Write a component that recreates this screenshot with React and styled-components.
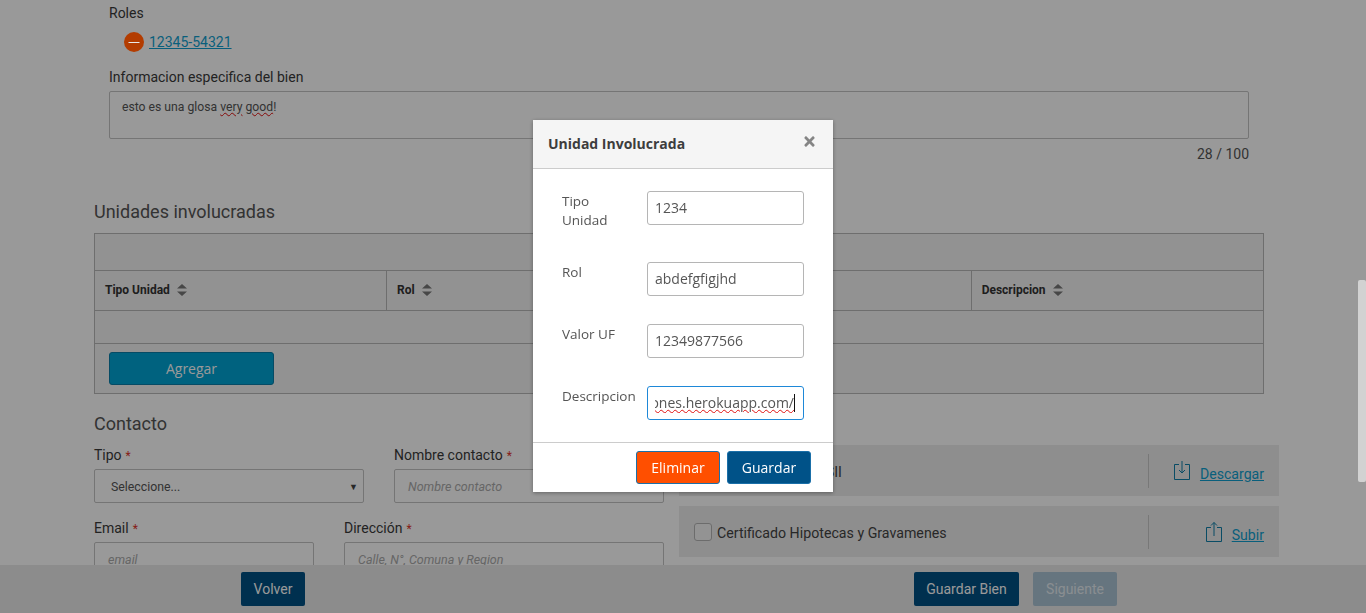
import React from "react";
import { FaTimes } from "react-icons/fa";
import styled, { createGlobalStyle } from "styled-components";

const GlobalStyle = createGlobalStyle`
  html, body {
    margin: 0;
    height: 100%;
    overflow: hidden;
    background: #ffffff;
  }
  * {
    box-sizing: border-box;
  }
  body {
    font-family: Roboto, "Liberation Sans", sans-serif;
    font-size: 14px;
    color: #333333;
  }
`;

const Page = styled.div`
  height: 613px;
  overflow: hidden;
  padding: 3px 0 0 94px;
`;

const Indented = styled.div`
  width: 1155px;
  padding-left: 15px;
`;

const Label = styled.div`
  font-size: 14px;
  line-height: 20px;
  color: #3a3a3a;
  margin-top: ${(p) => p.$top || 0}px;
`;

const Required = styled.span`
  color: #e0352b;
  margin-left: 4px;
  font-size: 12px;
  line-height: 1;
`;

const RoleRow = styled.div`
  display: flex;
  align-items: center;
  gap: 5px;
  height: 20px;
  margin-top: 9px;
  padding-left: 15px;
`;

// the reference keeps this badge brighter than the dimmed page behind the modal
const RoleBadge = styled.svg`
  position: relative;
  z-index: 1;
  flex: none;
`;

const Link = styled.a`
  color: #0f9fcf;
  font-size: 14px;
  text-decoration: underline;
`;

const TextBox = styled.div`
  height: 48px;
  margin-top: 4px;
  padding: 6px 12px;
  border: 1px solid #c4c4c4;
  border-radius: 2px;
  font-size: 12.2px;
  line-height: 18px;
  color: #555555;
`;

const Misspelled = styled.span`
  text-decoration: underline wavy #e01010 1px;
`;

const Counter = styled.div`
  margin-top: 5px;
  text-align: right;
  line-height: 20px;
  color: #555555;
`;

const SectionTitle = styled.h2`
  margin: ${(p) => p.$top}px 0 0;
  font-size: 18px;
  font-weight: 400;
  line-height: 24px;
  color: #555555;
`;

const Table = styled.div`
  width: 1170px;
  height: 161px;
  margin-top: 9px;
  border: 1px solid #b8b8b8;
  background: #f3f3f3;
  display: grid;
  grid-template-rows: 37px 40px 33px 1fr;
`;

const TableRow = styled.div`
  border-bottom: 1px solid #b8b8b8;
  &:last-child {
    border-bottom: 0;
    padding: 8px 14px;
  }
`;

const HeadRow = styled(TableRow)`
  display: grid;
  grid-template-columns: 291px repeat(3, 1fr);
`;

const HeadCell = styled.div`
  display: flex;
  align-items: center;
  gap: 7px;
  padding: 0 0 2px 10px;
  font-size: 12px;
  font-weight: 700;
  color: #333333;
  border-left: 1px solid #b8b8b8;
  &:first-child {
    border-left: 0;
  }
  svg {
    fill: #777777;
  }
`;

const AddButton = styled.button`
  width: 165px;
  height: 33px;
  border: 1px solid #0a7ea8;
  border-radius: 3px;
  background: #00a3d4;
  color: #ffffff;
  font-family: "Open Sans", sans-serif;
  font-size: 14px;
`;

const Columns = styled.div`
  display: flex;
  gap: 15px;
  margin-top: 9px;
`;

const ContactColumn = styled.div`
  width: 570px;
`;

const FormRow = styled.div`
  display: flex;
  gap: 30px;
  margin-bottom: 15px;
`;

const FormField = styled.div`
  width: ${(p) => p.$width}px;
`;

const Control = styled.div`
  height: 34px;
  margin-top: 4px;
  padding: 0 13px;
  display: flex;
  align-items: center;
  justify-content: space-between;
  border: 1px solid #c4c4c4;
  border-radius: 2px;
  background: #ffffff;
  font-size: 12.5px;
  color: #555555;
`;

const SelectBox = styled(Control)`
  padding: 2px 5px 0 16px;
  font-size: 12.3px;
  span:last-child {
    font-size: 9px;
    color: #444444;
  }
`;

const Placeholder = styled(Control)`
  font-style: italic;
  color: #aaaaaa;
`;

const DocumentColumn = styled.div`
  width: 600px;
  display: flex;
  flex-direction: column;
  gap: 10px;
`;

const DocumentRow = styled.div`
  height: 51px;
  padding: 0 15px;
  display: flex;
  align-items: center;
  background: #ededed;
`;

const CheckBox = styled.span`
  width: 18px;
  height: 18px;
  border: 1px solid #b5b5b5;
  border-radius: 3px;
  background: #f5f5f5;
`;

const DocumentName = styled.span`
  flex: 1;
  margin-left: 5px;
  padding-top: 2px;
  font-size: 14.2px;
  color: #444444;
`;

const DocumentAction = styled.div`
  width: 116px;
  height: 34px;
  display: flex;
  align-items: center;
  justify-content: flex-end;
  gap: 10px;
  border-left: 1px solid #c8c8c8;
  svg {
    stroke: #0f7fa8;
    fill: none;
    flex: none;
  }
  a {
    margin-top: 7px;
    font-size: 14.1px;
  }
`;

const Footer = styled.div`
  position: fixed;
  left: 0;
  right: 0;
  bottom: 0;
  height: 48px;
  padding-top: 7px;
  display: flex;
  background: #eaeaea;
`;

const FooterButton = styled.button`
  height: 34px;
  width: ${(p) => p.$width}px;
  margin-left: ${(p) => p.$left}px;
  border: 0;
  border-radius: 2px;
  background: ${(p) => (p.$disabled ? "#aac3d4" : "#005084")};
  color: ${(p) => (p.$disabled ? "#e6edf2" : "#ffffff")};
  font-family: Roboto, sans-serif;
  font-size: 14px;
`;

const Backdrop = styled.div`
  position: fixed;
  inset: 0;
  background: rgba(0, 0, 0, 0.4);
`;

const ScrollThumb = styled.div`
  position: fixed;
  top: 280px;
  right: 0;
  width: 8px;
  height: 202px;
  border-radius: 2px;
  background: #d2d2d2;
`;

const Modal = styled.div`
  position: fixed;
  z-index: 2;
  top: 120px;
  left: 533px;
  width: 300px;
  height: 372px;
  background: #ffffff;
  box-shadow: 0 1px 4px rgba(0, 0, 0, 0.35);
  font-family: "Open Sans", sans-serif;
`;

const ModalHeader = styled.div`
  height: 49px;
  padding: 0 16px 0 15px;
  display: flex;
  align-items: center;
  justify-content: space-between;
  background: #f5f5f5;
  border-bottom: 1px solid #cccccc;
  svg {
    margin-top: -5px;
    color: #858585;
    font-size: 15px;
  }
`;

const ModalTitle = styled.div`
  margin-top: -2px;
  font-size: 14px;
  font-weight: 700;
  color: #3d3d3d;
`;

const ModalBody = styled.div`
  height: 274px;
  padding: 22px 29px 0;
  display: flex;
  flex-direction: column;
  gap: 28px;
  border-bottom: 1px solid #cccccc;
`;

const ModalRow = styled.div`
  display: grid;
  grid-template-columns: 85px 157px;
  align-items: start;
`;

const ModalLabel = styled.label`
  padding: 1px 0 4px;
  font-size: 13.5px;
  line-height: 19px;
  color: #555555;
`;

const ModalInput = styled.input`
  width: 157px;
  height: 34px;
  padding: 0 7px 2px;
  border: 1px solid #b5b5b5;
  border-radius: 3px;
  font-family: "Open Sans", sans-serif;
  font-size: 14px;
  color: #555555;
  outline: none;
`;

const FocusedInput = styled.div`
  width: 157px;
  height: 34px;
  padding: 0 8px 0 7px;
  display: flex;
  align-items: center;
  border: 1px solid #1e88d8;
  border-radius: 3px;
  font-size: 14px;
  color: #555555;
`;

const ClippedText = styled.div`
  flex: 1;
  display: flex;
  justify-content: flex-end;
  overflow: hidden;
  white-space: nowrap;
  line-height: 20px;
`;

const Caret = styled.span`
  flex: none;
  width: 1px;
  height: 18px;
  background: #111111;
`;

const ModalFooter = styled.div`
  padding: 8px 22px 0 0;
  display: flex;
  justify-content: flex-end;
  gap: 7px;
`;

const ModalButton = styled.button`
  width: 84px;
  height: 33px;
  border: 1px solid #1a6fa8;
  border-radius: 3px;
  background: ${(p) => (p.$danger ? "#ff4f00" : "#005288")};
  color: #ffffff;
  font-family: "Open Sans", sans-serif;
  font-size: 14px;
  font-weight: 500;
`;

const MinusIcon = () => (
  <RoleBadge width="20" height="20" viewBox="0 0 20 20">
    <circle cx="10" cy="10" r="10" fill="#b33c00" />
    <rect x="4.5" y="10" width="11" height="1" fill="#e8e8e8" />
  </RoleBadge>
);

const SortIcon = () => (
  <svg width="10" height="12" viewBox="0 0 10 12">
    <path d="M5 0L10 4.5H0ZM0 7.5H10L5 12Z" />
  </svg>
);

const DownloadIcon = () => (
  <svg width="16" height="19" viewBox="0 0 16 19">
    <path d="M5 3.5H.5V18.5H15.5V3.5H11M8 0V12M5 9L8 12L11 9" />
  </svg>
);

const UploadIcon = () => (
  <svg width="16" height="20" viewBox="0 0 16 20">
    <path d="M5 5.5H.5V19.5H15.5V5.5H11M8 14V.5M5 3.5L8 .5L11 3.5" />
  </svg>
);

const columns = ["Tipo Unidad", "Rol", "Valor UF", "Descripcion"];

const App = () => {
  return (
    <>
      <GlobalStyle />
      <Page>
        <Indented>
          <Label>Roles</Label>
          <RoleRow>
            <MinusIcon />
            <Link>12345-54321</Link>
          </RoleRow>
          <Label $top={15}>Informacion especifica del bien</Label>
          <TextBox>
            esto es una glosa <Misspelled>very</Misspelled>{" "}
            <Misspelled>good</Misspelled>!
          </TextBox>
          <Counter>28 / 100</Counter>
        </Indented>

        <SectionTitle $top={36}>Unidades involucradas</SectionTitle>
        <Table>
          <TableRow />
          <HeadRow>
            {columns.map((name) => (
              <HeadCell key={name}>
                {name} <SortIcon />
              </HeadCell>
            ))}
          </HeadRow>
          <TableRow />
          <TableRow>
            <AddButton>Agregar</AddButton>
          </TableRow>
        </Table>

        <SectionTitle $top={18}>Contacto</SectionTitle>
        <Columns>
          <ContactColumn>
            <FormRow>
              <FormField $width={270}>
                <Label>
                  Tipo<Required>*</Required>
                </Label>
                <SelectBox>
                  <span>Seleccione...</span>
                  <span>▼</span>
                </SelectBox>
              </FormField>
              <FormField $width={270}>
                <Label>
                  Nombre contacto<Required>*</Required>
                </Label>
                <Placeholder>Nombre contacto</Placeholder>
              </FormField>
            </FormRow>
            <FormRow>
              <FormField $width={220}>
                <Label>
                  Email<Required>*</Required>
                </Label>
                <Placeholder>email</Placeholder>
              </FormField>
              <FormField $width={320}>
                <Label>
                  Dirección<Required>*</Required>
                </Label>
                <Placeholder>Calle, N°, Comuna y Region</Placeholder>
              </FormField>
            </FormRow>
          </ContactColumn>
          <DocumentColumn>
            <DocumentRow>
              <CheckBox />
              <DocumentName>Certificado Pago SII</DocumentName>
              <DocumentAction>
                <DownloadIcon />
                <Link>Descargar</Link>
              </DocumentAction>
            </DocumentRow>
            <DocumentRow>
              <CheckBox />
              <DocumentName>Certificado Hipotecas y Gravamenes</DocumentName>
              <DocumentAction>
                <UploadIcon />
                <Link>Subir</Link>
              </DocumentAction>
            </DocumentRow>
          </DocumentColumn>
        </Columns>
      </Page>

      <Footer>
        <FooterButton $width={64} $left={241}>
          Volver
        </FooterButton>
        <FooterButton $width={105} $left={609}>
          Guardar Bien
        </FooterButton>
        <FooterButton $width={84} $left={14} $disabled>
          Siguiente
        </FooterButton>
      </Footer>

      <Backdrop />
      <ScrollThumb />

      <Modal>
        <ModalHeader>
          <ModalTitle>Unidad Involucrada</ModalTitle>
          <FaTimes />
        </ModalHeader>
        <ModalBody>
          <ModalRow>
            <ModalLabel>
              Tipo
              <br />
              Unidad
            </ModalLabel>
            <ModalInput defaultValue="1234" />
          </ModalRow>
          <ModalRow>
            <ModalLabel>Rol</ModalLabel>
            <ModalInput defaultValue="abdefgfigjhd" />
          </ModalRow>
          <ModalRow>
            <ModalLabel>Valor UF</ModalLabel>
            <ModalInput defaultValue="12349877566" />
          </ModalRow>
          <ModalRow>
            <ModalLabel>Descripcion</ModalLabel>
            <FocusedInput>
              <ClippedText>
                <Misspelled>http://tasaciones.herokuapp.com/</Misspelled>
              </ClippedText>
              <Caret />
            </FocusedInput>
          </ModalRow>
        </ModalBody>
        <ModalFooter>
          <ModalButton $danger>Eliminar</ModalButton>
          <ModalButton>Guardar</ModalButton>
        </ModalFooter>
      </Modal>
    </>
  );
};

export default App;
